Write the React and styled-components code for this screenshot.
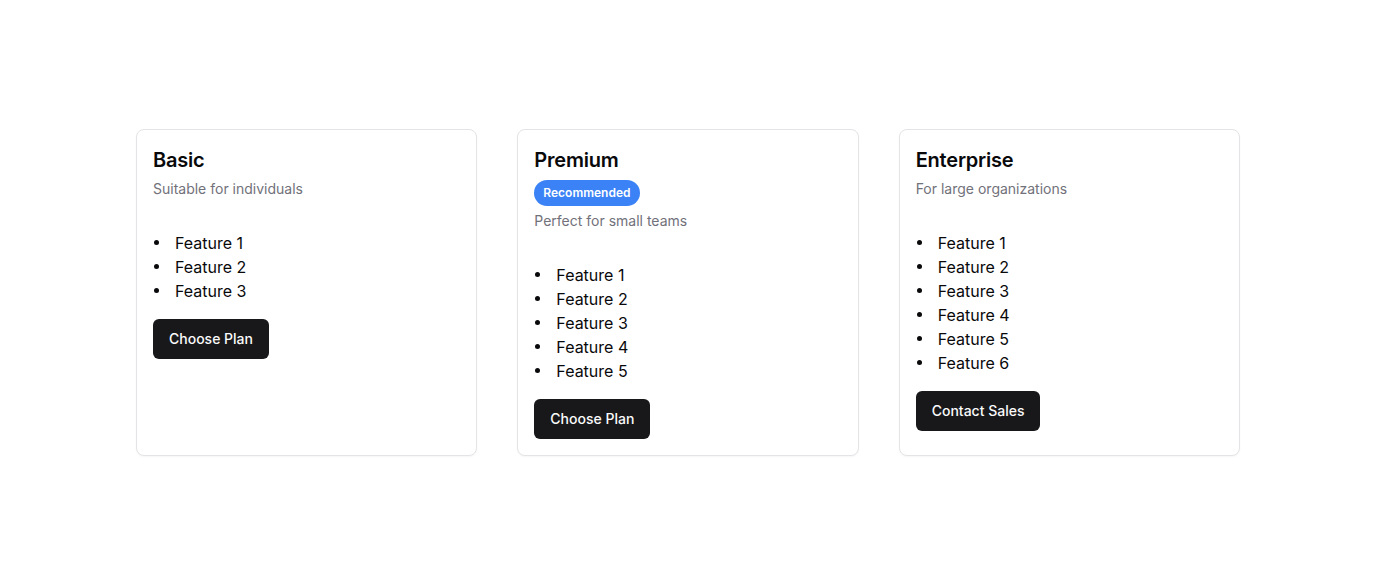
import React from 'react'
import styled, { createGlobalStyle } from 'styled-components'

const GlobalStyle = createGlobalStyle`
    * {
        box-sizing: border-box;
    }
    body {
        margin: 0;
        background: #ffffff;
        font-family: Inter, "Liberation Sans", sans-serif;
        color: #09090b;
    }
`

const Page = styled.div`
    min-height: 100vh;
    display: flex;
    align-items: center;
    justify-content: center;
`

const Grid = styled.div`
    width: 100%;
    max-width: 1152px;
    padding: 0 24px;
    display: grid;
    grid-template-columns: repeat(3, 1fr);
    gap: 40px;
`

const Card = styled.div`
    border: 1px solid #e4e4e7;
    border-radius: 8px;
    background: #ffffff;
    box-shadow: 0 1px 2px rgba(0, 0, 0, 0.04);
    padding: 16px;
    display: flex;
    flex-direction: column;
    align-items: flex-start;
`

const Header = styled.div`
    display: flex;
    flex-direction: column;
    align-items: flex-start;
    gap: 5px;
    margin-bottom: 16px;
`

const Title = styled.h3`
    margin: 0;
    font-size: 20px;
    line-height: 28px;
    font-weight: 600;
    letter-spacing: -0.2px;
`

const Badge = styled.span`
    display: inline-flex;
    align-items: center;
    height: 26px;
    margin-top: 1px;
    padding: 0 9px;
    border-radius: 999px;
    background: #3b82f6;
    color: #ffffff;
    font-size: 12px;
    font-weight: 600;
`

const Description = styled.p`
    margin: 0;
    font-size: 14px;
    line-height: 20px;
    color: #71717a;
`

const Features = styled.ul`
    margin: 16px 0;
    padding: 0;
    list-style: none;
    font-size: 16px;
    line-height: 24px;
`

const Feature = styled.li`
    display: flex;
    align-items: center;

    &::before {
        content: '';
        width: 5px;
        height: 5px;
        border-radius: 50%;
        background: #09090b;
        margin: 0 16px 0 1px;
    }
`

const Button = styled.button`
    height: 40px;
    padding: 0 16px;
    border: none;
    border-radius: 6px;
    background: #18181b;
    color: #fafafa;
    font-family: inherit;
    font-size: 14px;
    font-weight: 500;
    cursor: pointer;
`

const plans = [
    { name: 'Basic', description: 'Suitable for individuals', features: 3, action: 'Choose Plan' },
    { name: 'Premium', description: 'Perfect for small teams', features: 5, action: 'Choose Plan', recommended: true },
    { name: 'Enterprise', description: 'For large organizations', features: 6, action: 'Contact Sales' },
]

function App() {
    return (
        <Page>
            <GlobalStyle />
            <Grid>
                {plans.map(plan => (
                    <Card key={plan.name}>
                        <Header>
                            <Title>{plan.name}</Title>
                            {plan.recommended && <Badge>Recommended</Badge>}
                            <Description>{plan.description}</Description>
                        </Header>
                        <Features>
                            {Array.from({ length: plan.features }, (_, i) => (
                                <Feature key={i}>Feature {i + 1}</Feature>
                            ))}
                        </Features>
                        <Button>{plan.action}</Button>
                    </Card>
                ))}
            </Grid>
        </Page>
    )
}

export default App
